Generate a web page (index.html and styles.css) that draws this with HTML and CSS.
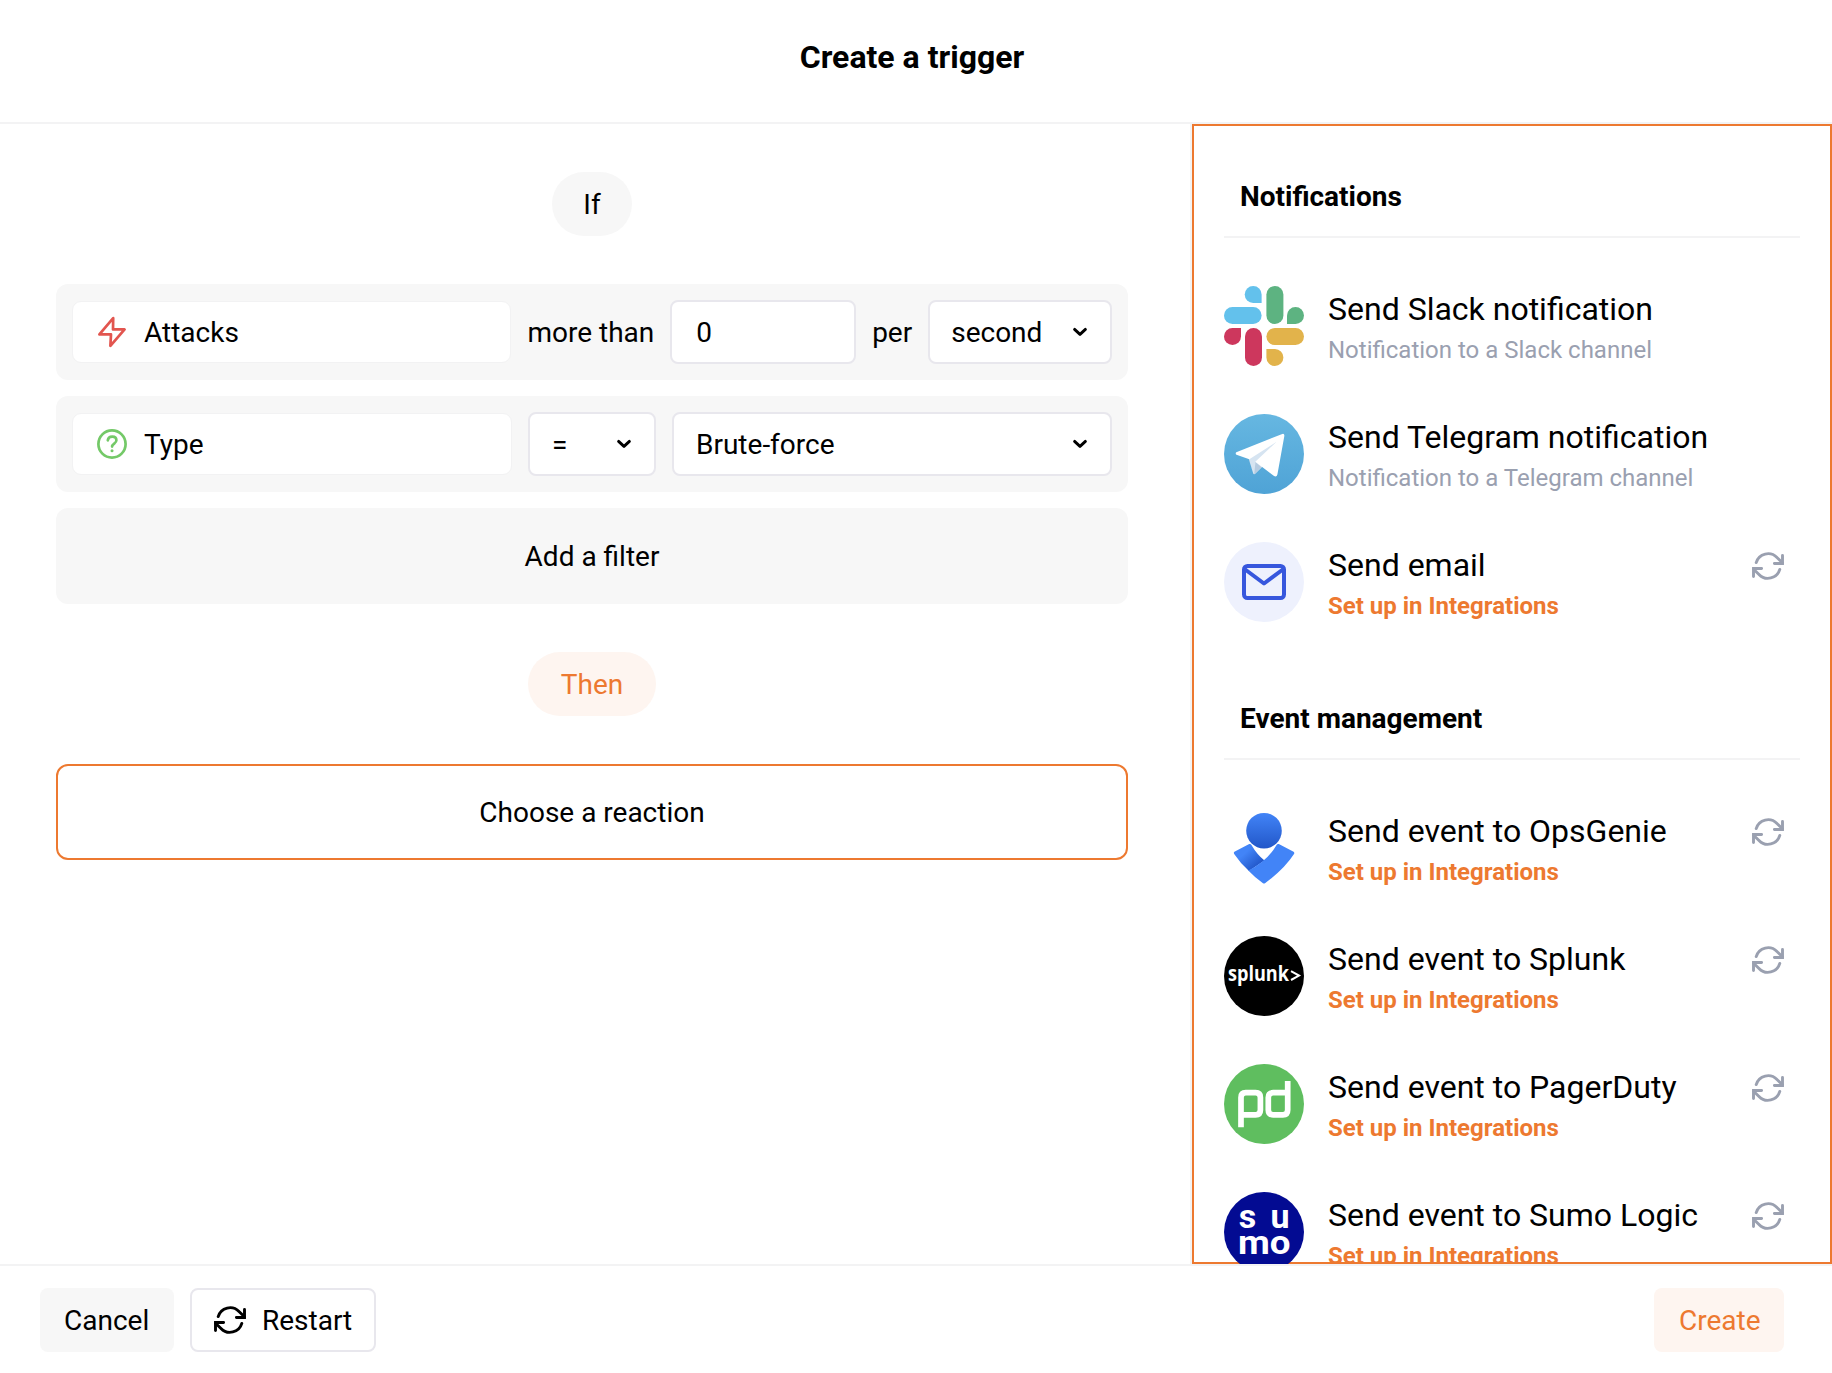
FILE: index.html
```html
<!DOCTYPE html>
<html lang="en">
<head>
<meta charset="utf-8">
<title>Create a trigger</title>
<link rel="stylesheet" href="styles.css">
</head>
<body>
<svg class="defs" width="0" height="0">
  <symbol id="refresh" viewBox="0 0 32 28">
    <g fill="none" stroke="currentColor" stroke-width="2.9" stroke-linecap="round" stroke-linejoin="miter">
      <path d="M4.2 10.6A12.3 12.3 0 0 1 25 5.6L30.4 10.8"/><path d="M22.4 11.5H30.5V3.4"/>
      <path d="M27.8 17.4A12.3 12.3 0 0 1 7 22.4L1.6 17.2"/><path d="M9.6 16.5H1.5V24.6"/>
    </g>
  </symbol>
  <symbol id="chevron" viewBox="0 0 16 10"><path d="M2.6 2.4L8 7.4L13.4 2.4" fill="none" stroke="currentColor" stroke-width="2.9" stroke-linecap="round" stroke-linejoin="round"/></symbol>
</svg>
<div class="modal">
  <header class="header"><h1 class="title">Create a trigger</h1></header>
  <div class="body">
    <main class="builder">
      <div class="pill pill-if">If</div>
      <div class="rows">
        <div class="row">
          <div class="field"><svg class="field-icon" viewBox="0 0 32 32"><path d="M17.2 2.2L3.4 18.4H15L14.4 29.8L28.6 13.4H17Z" fill="none" stroke="#e2554f" stroke-width="2.7" stroke-linejoin="round"/></svg><span class="label">Attacks</span></div>
          <span class="label">more than</span>
          <div class="control amount"><span class="label">0</span></div>
          <span class="label">per</span>
          <div class="control unit"><span class="label">second</span><svg class="chevron"><use href="#chevron"/></svg></div>
        </div>
        <div class="row">
          <div class="field"><svg class="field-icon" viewBox="0 0 32 32"><g fill="none" stroke="#74c968" stroke-width="2.7" stroke-linecap="round" stroke-linejoin="round"><circle cx="16" cy="16" r="13.6"/><path d="M11.8 12.3C12.5 7.4 20.3 7.6 20.4 12.4C20.4 15.4 16.1 15.7 16.1 18.6"/></g><circle cx="16" cy="22.7" r="1.5" fill="#74c968"/></svg><span class="label">Type</span></div>
          <div class="control operator"><span class="label">=</span><svg class="chevron"><use href="#chevron"/></svg></div>
          <div class="control value"><span class="label">Brute-force</span><svg class="chevron"><use href="#chevron"/></svg></div>
        </div>
        <div class="row add"><span class="label">Add a filter</span></div>
      </div>
      <div class="pill pill-then">Then</div>
      <div class="reaction"><span class="label">Choose a reaction</span></div>
    </main>
    <aside class="panel">
      <h2 class="group">Notifications</h2>
      <div class="item">
        <svg class="logo" viewBox="0 0 80 80">
          <g fill="#63c1ec"><path d="M29.2 0a8.4 8.4 0 0 1 8.4 8.4V17H29.2a8.4 8.4 0 0 1 0-17Z"/><rect y="21" width="37.6" height="17" rx="8.5"/></g>
          <g fill="#5db381"><rect x="42.4" width="17" height="38" rx="8.5"/><path d="M63 38V29.5a8.5 8.5 0 1 1 8.5 8.5Z"/></g>
          <g fill="#e2b34b"><rect x="42.4" y="42" width="37.6" height="17" rx="8.5"/><path d="M42.4 63H51a8.5 8.5 0 1 1-8.6 8.5Z"/></g>
          <g fill="#cd375d"><path d="M17 42V50.5A8.5 8.5 0 1 1 8.5 42Z"/><rect x="21" y="42" width="17" height="38" rx="8.5"/></g>
        </svg>
        <div class="text"><div class="name">Send Slack notification</div><div class="note">Notification to a Slack channel</div></div>
      </div>
      <div class="item">
        <svg class="logo" viewBox="0 0 80 80">
          <defs><linearGradient id="tg" x2="0" y2="1"><stop stop-color="#66b7e1"/><stop offset="1" stop-color="#4fa3d6"/></linearGradient></defs>
          <circle cx="40" cy="40" r="40" fill="url(#tg)"/>
          <path d="M24.500 44L29.200 59.500Q30 61 31.500 59.500L42 49L53 26Z" fill="#d6e4f1"/><path d="M30.200 60.300L31.500 48L37.500 53.200Z" fill="#b6cbe0"/>
          <path d="M12.300 38.300L58.300 19.900Q60.700 19.300 60.300 22.300L53.400 60.500Q52.600 63.600 49.700 61.800L31.300 47.800L52.300 28L25.300 45.300L12.500 40.800Q11 39.500 12.300 38.300Z" fill="#fff"/>
        </svg>
        <div class="text"><div class="name">Send Telegram notification</div><div class="note">Notification to a Telegram channel</div></div>
      </div>
      <div class="item">
        <svg class="logo" viewBox="0 0 80 80"><circle cx="40" cy="40" r="40" fill="#eef1fd"/><g fill="none" stroke="#3757dd" stroke-width="4" stroke-linejoin="round"><rect x="20" y="24" width="40" height="32" rx="3.500"/><path d="M20.500 27L40 41.500L59.500 27"/></g></svg>
        <div class="text"><div class="name">Send email</div><div class="setup">Set up in Integrations</div></div>
        <svg class="sync"><use href="#refresh"/></svg>
      </div>
      <h2 class="group group-next">Event management</h2>
      <div class="item">
        <svg class="logo" viewBox="0 0 80 80">
          <defs><linearGradient id="og" x2="0" y2="1"><stop stop-color="#4284f7"/><stop offset="1" stop-color="#2257c9"/></linearGradient><linearGradient id="ov" x1=".35" y1=".35" x2=".8" y2=".8"><stop stop-color="#4284f7"/><stop offset="1" stop-color="#2257c9"/></linearGradient></defs>
          <circle cx="40" cy="22.700" r="17.800" fill="url(#og)"/>
          <path d="M10.400 43.800L25.200 36Q26.800 35.600 27.600 37.200Q33 46.500 40.500 52.500L25 63Q16 55 10 45.800Q9.500 44.500 10.400 43.800Z" fill="url(#ov)"/>
          <path d="M69.600 43.800L54.800 36Q53.200 35.600 52.400 37.200Q43 53.500 24.300 62.400Q31 69.500 39 75.200Q40 76 41 75.200Q60 61.500 70.200 45.800Q70.500 44.500 69.600 43.800Z" fill="#4284f7"/>
        </svg>
        <div class="text"><div class="name">Send event to OpsGenie</div><div class="setup">Set up in Integrations</div></div>
        <svg class="sync"><use href="#refresh"/></svg>
      </div>
      <div class="item">
        <svg class="logo" viewBox="0 0 80 80"><circle cx="40" cy="40" r="40"/><text class="splunk" x="4" y="45" textLength="61" lengthAdjust="spacingAndGlyphs">splunk</text><path d="M67 35.200L75 39.600L67 44" fill="none" stroke="#fff" stroke-width="2"/></svg>
        <div class="text"><div class="name">Send event to Splunk</div><div class="setup">Set up in Integrations</div></div>
        <svg class="sync"><use href="#refresh"/></svg>
      </div>
      <div class="item">
        <svg class="logo" viewBox="0 0 80 80"><circle cx="40" cy="40" r="40" fill="#5fbe5f"/><g fill="none" stroke="#fff" stroke-width="5.700"><path d="M17 63.300V33.500Q17 28.700 21.800 28.700H31.600Q36.400 28.700 36.400 33.500V46Q36.400 50.800 31.600 50.800H19.500"/><path d="M63.700 17V46Q63.700 50.800 58.900 50.800H49.100Q44.300 50.800 44.300 46V33.500Q44.300 28.700 49.100 28.700H61"/></g></svg>
        <div class="text"><div class="name">Send event to PagerDuty</div><div class="setup">Set up in Integrations</div></div>
        <svg class="sync"><use href="#refresh"/></svg>
      </div>
      <div class="item">
        <svg class="logo" viewBox="0 0 80 80"><circle cx="40" cy="40" r="40" fill="#030b92"/><g class="sumo"><text x="14.700" y="36">s</text><text x="46.500" y="36">u</text><text x="14" y="62" textLength="52.500" lengthAdjust="spacingAndGlyphs">mo</text></g></svg>
        <div class="text"><div class="name">Send event to Sumo Logic</div><div class="setup">Set up in Integrations</div></div>
        <svg class="sync"><use href="#refresh"/></svg>
      </div>
    </aside>
  </div>
  <footer class="footer">
    <div class="button cancel"><span class="label">Cancel</span></div>
    <div class="button restart"><svg class="restart-icon"><use href="#refresh"/></svg><span class="label">Restart</span></div>
    <div class="button create"><span class="label">Create</span></div>
  </footer>
</div>
</body>
</html>
```
FILE: styles.css
```css
* { box-sizing: border-box; }
body { margin: 0; font: 28px/40px Roboto, sans-serif; color: #000; background: #fff; }
svg { display: block; flex: none; }
.defs { position: absolute; }
.modal { height: 1373px; display: flex; flex-direction: column; overflow: hidden; }
.header { height: 124px; flex: none; padding-top: 37px; padding-right: 8px; border-bottom: 2px solid #f3f3f4; text-align: center; }
.title { margin: 0; font-size: 32px; line-height: 40px; font-weight: 700; }
.body { height: 1140px; flex: none; display: flex; }
.builder { width: 1192px; padding: 48px 62px 0 56px; border-right: 2px solid #f3f3f4; display: flex; flex-direction: column; align-items: center; }
.label { padding-top: 2px; }
.pill { height: 64px; padding-top: 13px; border-radius: 32px; text-align: center; }
.pill-if { width: 80px; background: #f7f7f7; }
.pill-then { width: 128px; background: #fef5f0; color: #ed7930; }
.rows { width: 100%; margin: 48px 0; display: flex; flex-direction: column; gap: 16px; }
.row { height: 96px; padding: 16px; display: flex; align-items: center; gap: 16px; background: #f7f7f7; border-radius: 12px; white-space: nowrap; }
.add { justify-content: center; }
.field { width: 440px; height: 62px; padding: 0 23px; display: flex; align-items: center; gap: 16px; background: #fff; border: 1px solid #f2f2f3; border-radius: 9px; }
.field-icon { width: 32px; height: 32px; }
.control { height: 64px; padding: 0 22px; display: flex; align-items: center; justify-content: space-between; background: #fff; border: 2px solid #e8e7ed; border-radius: 8px; }
.amount { width: 186px; padding-left: 24px; margin-left: auto; }
.unit { width: 184px; padding-left: 21px; }
.operator { width: 128px; }
.value { width: 440px; }
.chevron { width: 16px; height: 10px; }
.reaction { width: 100%; height: 96px; margin-top: 48px; display: flex; align-items: center; justify-content: center; border: 2px solid #ed7930; border-radius: 12px; }
.panel { width: 640px; padding: 0 30px; border: solid #ed7930; border-width: 2px 2px 0; background: linear-gradient(#ed7930, #ed7930) bottom / 100% 2px no-repeat; overflow: hidden; }
.group { height: 112px; margin: 0 0 24px; padding: 51px 16px 0; border-bottom: 2px solid #f3f3f4; font-size: 28px; line-height: 40px; font-weight: 700; }
.group-next { margin-top: 2px; }
.item { height: 128px; padding: 24px 16px 24px 0; display: flex; gap: 24px; }
.logo { width: 80px; height: 80px; }
.text { flex: 1; white-space: nowrap; }
.name { font-size: 32px; line-height: 46px; padding-bottom: 2px; }
.note, .setup { font-size: 24px; line-height: 32px; }
.note { color: #9aa0b0; }
.setup { color: #ed7930; font-weight: 700; }
.sync { width: 32px; height: 28px; margin-top: 10px; color: #9aa0b0; }
.splunk { font: 700 22px "Open Sans", sans-serif; fill: #fff; }
.sumo { font: 700 34px Roboto, sans-serif; fill: #fff; }
.footer { height: 109px; padding: 22px 48px 0 40px; border-top: 2px solid #f3f3f4; display: flex; gap: 16px; }
.button { height: 64px; padding: 0 24px; display: flex; align-items: center; border-radius: 8px; }
.cancel { width: 134px; background: #f7f7f7; }
.restart { width: 186px; padding: 0 22px; gap: 16px; border: 2px solid #e8e7ed; }
.restart-icon { width: 32px; height: 28px; }
.create { width: 130px; padding-left: 25px; margin-left: auto; background: #fef5f0; color: #ed7930; }
```
